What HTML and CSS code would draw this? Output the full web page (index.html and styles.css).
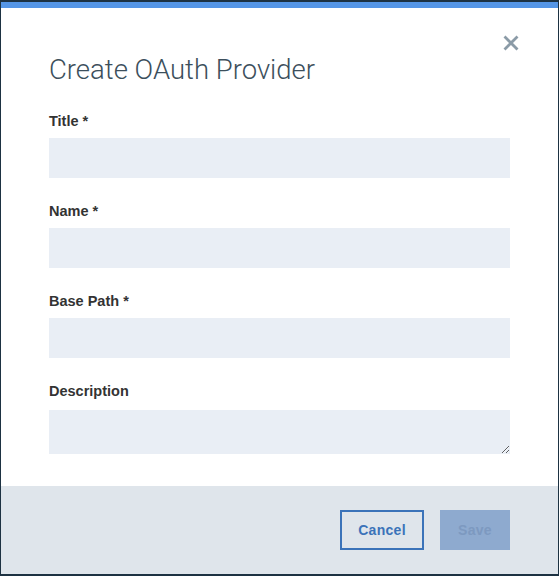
FILE: index.html
```html
<!DOCTYPE html>
<html>
<head>
<meta charset="utf-8">
<link rel="stylesheet" href="styles.css">
</head>
<body>
<div class="frame">
  <div class="modal">
    <div class="body">
      <button class="close" aria-label="Close">
        <svg width="16" height="16" viewBox="0 0 16 16"><path d="M1.5 1.5 L14.5 14.5 M14.5 1.5 L1.5 14.5" stroke="#8b9ba7" stroke-width="2.8" stroke-linecap="butt"/></svg>
      </button>
      <h1 class="heading">Create OAuth Provider</h1>
      <div class="field">
        <label class="label">Title *</label>
        <input class="input" type="text">
      </div>
      <div class="field">
        <label class="label">Name *</label>
        <input class="input" type="text">
      </div>
      <div class="field">
        <label class="label">Base Path *</label>
        <input class="input" type="text">
      </div>
      <div class="field">
        <label class="label">Description</label>
        <textarea class="textarea"></textarea>
      </div>
    </div>
    <div class="footer">
      <button class="btn btn-secondary">Cancel</button>
      <button class="btn btn-primary" disabled>Save</button>
    </div>
  </div>
</div>
</body>
</html>
```
FILE: styles.css
```css
html, body {
  margin: 0;
  padding: 0;
  background: #1d3242;
}
.frame {
  width: 559px;
  height: 576px;
  box-sizing: border-box;
  padding: 2px 1px 2px 1px;
  background: #1d3242;
}
.modal {
  height: 100%;
  display: flex;
  flex-direction: column;
  background: #fff;
  border-top: 6px solid #5596e6;
  box-sizing: border-box;
  font-family: "Liberation Sans", Arial, sans-serif;
}
.body {
  position: relative;
  flex: 1;
  padding: 47px 48px 0 48px;
}
.close {
  position: absolute;
  top: 25px;
  right: 37px;
  width: 20px;
  height: 20px;
  padding: 2px;
  border: 0;
  background: transparent;
}
.heading {
  margin: 0 0 28px;
  font-family: Roboto, "Liberation Sans", sans-serif;
  font-size: 27.5px;
  font-weight: 300;
  color: #3c4f5c;
  line-height: 30px;
}
.field {
  display: flex;
  flex-direction: column;
  margin-bottom: 25px;
}
.label {
  font-size: 14.5px;
  font-weight: bold;
  color: #333;
  line-height: 16px;
  margin-bottom: 9px;
}
.input, .textarea {
  height: 40px;
  border: 0;
  background: #e9eef5;
  box-sizing: border-box;
  margin: 0;
  padding: 0 12px;
}
.textarea {
  height: 44px;
  resize: vertical;
  margin-top: 2px;
}
.footer {
  height: 88px;
  background: #dfe5eb;
  display: flex;
  justify-content: flex-end;
  align-items: flex-start;
  gap: 16px;
  padding: 24px 48px 0 0;
  box-sizing: border-box;
}
.btn {
  height: 40px;
  font-family: "Liberation Sans", Arial, sans-serif;
  font-size: 14px;
  font-weight: bold;
  letter-spacing: 0.3px;
  box-sizing: border-box;
  margin: 0;
}
.btn-secondary {
  width: 84px;
  border: 2px solid #3b73b9;
  background: transparent;
  color: #3b73b9;
}
.btn-primary {
  width: 70px;
  border: 0;
  background: #8eaacf;
  color: #7d99c0;
}
```
